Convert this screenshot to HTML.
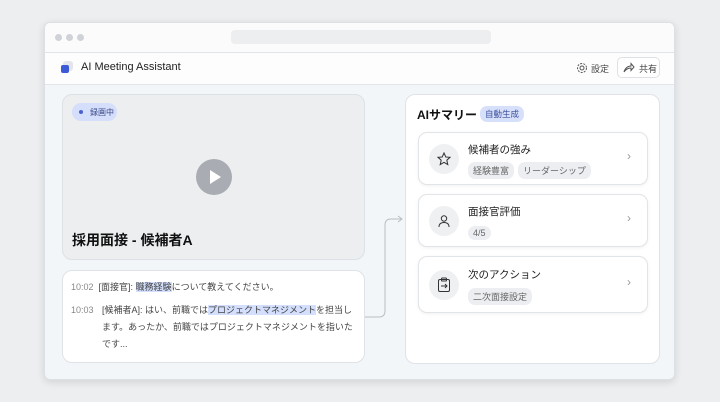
<!DOCTYPE html>
<html><head><meta charset="utf-8"><style>
*{box-sizing:border-box;margin:0;padding:0}
body{width:720px;height:402px;background:#eceef0;font-family:"Liberation Sans","Noto Sans CJK JP",sans-serif;position:relative;overflow:hidden;color:#222}
.win{position:absolute;left:44px;top:22px;width:631px;height:358px;background:#f3f6f8;border-radius:6px;box-shadow:0 2px 8px rgba(0,0,0,.12);overflow:hidden;border:1px solid #dde1e5}
.tb{position:absolute;left:0;top:0;width:100%;height:30px;background:#fbfbfc;border-bottom:1px solid #e2e5e8}
.dot{position:absolute;top:11px;width:7px;height:7px;border-radius:50%;background:#cfd2d6}
.url{position:absolute;left:186px;top:7px;width:260px;height:14px;border-radius:4px;background:#eceef0}
.hd{position:absolute;left:0;top:30px;width:100%;height:32px;background:#fdfdfe;border-bottom:1px solid #e2e5e8}
.card{position:absolute;background:#fff;border:1px solid #dfe3e7;border-radius:10px}
.abs{position:absolute}
.tag{display:inline-block;background:#eceef1;border-radius:7px;font-size:9px;color:#666;padding:2px 5px;margin-right:4px}
.item{position:absolute;left:12px;width:230px;background:#fff;border:1px solid #e1e4e8;border-radius:9px;box-shadow:0 1px 3px rgba(0,0,0,.06)}
.ic{position:absolute;left:10px;width:30px;height:30px;border-radius:50%;background:#eef0f2}
.hl{background:#d3dffc}
</style></head><body>
<div class="win">
 <div class="tb"><div class="dot" style="left:10px"></div><div class="dot" style="left:21px"></div><div class="dot" style="left:32px"></div><div class="url"></div></div>
 <div class="hd">
  <div class="abs" style="left:18px;top:8px;width:10px;height:10px;background:#e3e5ea;border-radius:3px"></div>
  <div class="abs" style="left:16px;top:12px;width:8px;height:8px;background:#3d5bd6;border-radius:2px"></div>
  <div class="abs" style="left:36px;top:8px;font-size:11px;color:#222">AI Meeting Assistant</div>
  <svg class="abs" style="left:531px;top:9px" width="12" height="12" viewBox="0 0 12 12" fill="none" stroke="#555" stroke-width="1"><circle cx="6" cy="6" r="2"/><circle cx="6" cy="6" r="4.5" stroke-dasharray="2 1.2"/></svg>
  <div class="abs" style="left:546px;top:9px;font-size:9px;color:#444">設定</div>
  <div class="abs" style="left:572px;top:4px;width:43px;height:21px;border:1px solid #dde1e5;border-radius:5px;background:#fff"></div>
  <svg class="abs" style="left:578px;top:9px" width="12" height="11" viewBox="0 0 12 11" fill="none" stroke="#555" stroke-width="1"><path d="M1 10 C2 6 5 4 8 4 V1.5 L11 5 L8 8.5 V6 C5 6 3 7 1 10Z"/></svg>
  <div class="abs" style="left:594px;top:9px;font-size:9px;color:#444">共有</div>
 </div>
 <div class="card" style="left:17px;top:71px;width:303px;height:166px;background:#eceef0;border-color:#dde1e5">
  <div class="abs" style="left:9px;top:8px;height:18px;width:45px;border-radius:9px;background:#d5defa;font-size:8px;color:#3a4a8a;padding:4px 0 0 18px">録画中</div>
  <div class="abs" style="left:16px;top:15px;width:4px;height:4px;border-radius:50%;background:#4a62cf"></div>
  <div class="abs" style="left:133px;top:64px;width:36px;height:36px;border-radius:50%;background:#a9adb3"></div>
  <svg class="abs" style="left:145px;top:74px" width="14" height="16"><path d="M2 1 L13 8 L2 15Z" fill="#fff"/></svg>
  <div class="abs" style="left:9px;top:135px;font-size:14px;font-weight:bold;color:#111">採用面接 - 候補者A</div>
 </div>
 <div class="card" style="left:17px;top:247px;width:303px;height:93px;font-size:9px;color:#444;line-height:17px">
  <div class="abs" style="left:8px;top:8px;width:290px"><span style="color:#888">10:02</span>&nbsp; [面接官]: <span class="hl">職務経験</span>について教えてください。</div>
  <div class="abs" style="left:8px;top:31px;color:#888">10:03</div>
  <div class="abs" style="left:39px;top:31px;width:258px">[候補者A]: はい、前職では<span class="hl">プロジェクトマネジメント</span>を担当します。あったか、前職ではプロジェクトマネジメントを指いたです...</div>
 </div>
 <svg class="abs" style="left:320px;top:190px" width="40" height="110" fill="none" stroke="#b8bec6" stroke-width="1"><path d="M0 104 H14 Q20 104 20 98 V12 Q20 6 26 6 H37 M33 3 L37 6 L33 9"/></svg>
 <div class="card" style="left:360px;top:71px;width:255px;height:270px">
  <div class="abs" style="left:11px;top:11px;font-size:12px;font-weight:bold;color:#111">AIサマリー</div>
  <div class="abs" style="left:74px;top:11px;background:#d7e0fb;color:#3b4f9c;font-size:8.5px;border-radius:7px;padding:2px 5px">自動生成</div>
  <div class="item" style="top:37px;height:53px">
   <div class="ic" style="top:11px"></div>
   <svg class="abs" style="left:18px;top:19px" width="14" height="14" viewBox="0 0 14 14" fill="none" stroke="#333" stroke-width="1"><path d="M7 1 L8.8 5 L13 5.3 L9.8 8.2 L10.8 12.6 L7 10.3 L3.2 12.6 L4.2 8.2 L1 5.3 L5.2 5Z"/></svg>
   <div class="abs" style="left:49px;top:9px;font-size:10.5px;color:#222">候補者の強み</div>
   <div class="abs" style="left:49px;top:28px"><span class="tag">経験豊富</span><span class="tag">リーダーシップ</span></div>
   <div class="abs" style="left:208px;top:16px;color:#999;font-size:12px">›</div>
  </div>
  <div class="item" style="top:99px;height:53px">
   <div class="ic" style="top:11px"></div>
   <svg class="abs" style="left:18px;top:19px" width="14" height="14" viewBox="0 0 14 14" fill="none" stroke="#333" stroke-width="1"><circle cx="7" cy="4.5" r="2.7"/><path d="M2 13 C2 9.5 4.5 8.5 7 8.5 C9.5 8.5 12 9.5 12 13"/></svg>
   <div class="abs" style="left:49px;top:9px;font-size:10.5px;color:#222">面接官評価</div>
   <div class="abs" style="left:49px;top:28px"><span class="tag">4/5</span></div>
   <div class="abs" style="left:208px;top:16px;color:#999;font-size:12px">›</div>
  </div>
  <div class="item" style="top:161px;height:57px">
   <div class="ic" style="top:13px"></div>
   <svg class="abs" style="left:18px;top:20px" width="14" height="16" viewBox="0 0 14 16" fill="none" stroke="#333" stroke-width="1"><rect x="1.5" y="2.5" width="11" height="12" rx="1.5"/><rect x="4.5" y="1" width="5" height="3" rx=".8"/><path d="M4 9 H10 M8 7 L10 9 L8 11"/></svg>
   <div class="abs" style="left:49px;top:10px;font-size:10.5px;color:#222">次のアクション</div>
   <div class="abs" style="left:49px;top:30px"><span class="tag">二次面接設定</span></div>
   <div class="abs" style="left:208px;top:18px;color:#999;font-size:12px">›</div>
  </div>
 </div>
</div>
</body></html>
